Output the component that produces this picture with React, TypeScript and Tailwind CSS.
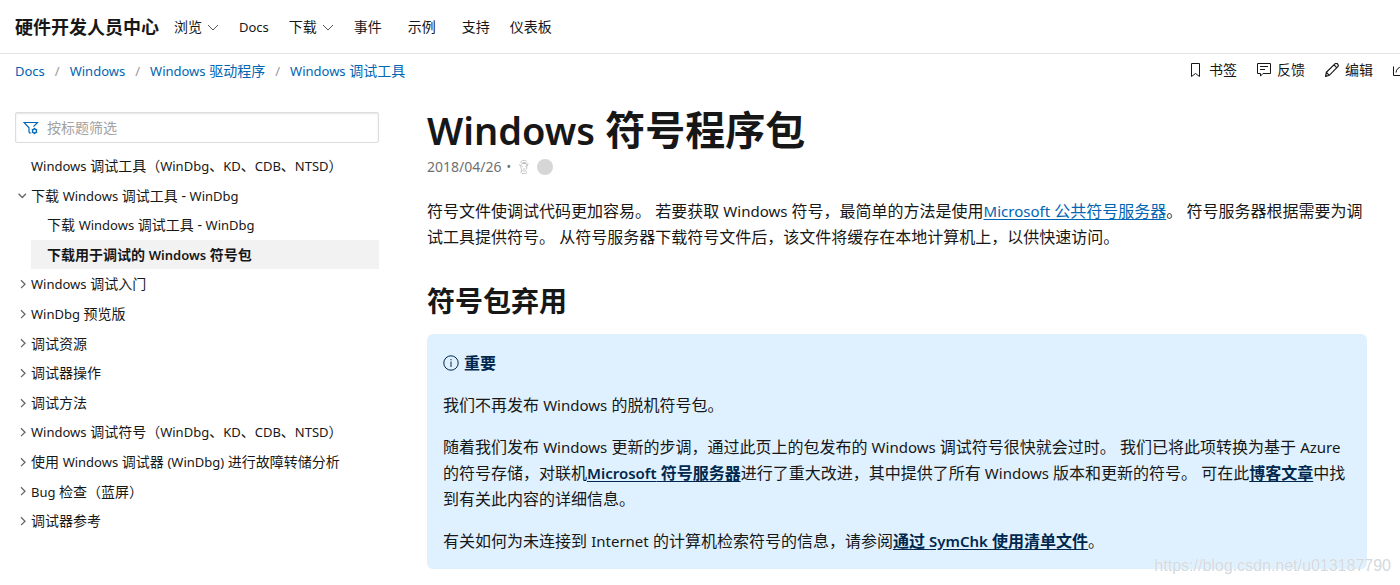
import { Fragment, type ReactNode } from "react";

type IconProps = { className?: string };

function ChevronDown({ className }: IconProps) {
  return (
    <svg viewBox="0 0 12 12" className={className} fill="none" stroke="currentColor" aria-hidden="true">
      <path d="M1 4 6 9l5-5" />
    </svg>
  );
}

function TreeChevron({ open }: { open?: boolean }) {
  return (
    <svg viewBox="0 0 10 10" className="size-[10px] shrink-0 text-[#666]" fill="none" stroke="currentColor" strokeWidth="1.3" aria-hidden="true">
      {open ? <path d="M.6 3.800l3.700 3.700L8 3.800" /> : <path d="M3 1.300l4 3.900L3 9.100" />}
    </svg>
  );
}

function BookmarkIcon() {
  return (
    <svg viewBox="0 0 14 14" className="size-[14px]" fill="none" stroke="currentColor" aria-hidden="true">
      <path d="M2.5.5h8v13l-4-3-4 3z" />
    </svg>
  );
}

function FeedbackIcon() {
  return (
    <svg viewBox="0 0 14 14" className="size-[14px]" fill="none" stroke="currentColor" aria-hidden="true">
      <path d="M.5.5h13v10H6l-2.500 2.600v-2.600h-3z" />
      <path d="M3 3.500h8M3 6.500h5" />
    </svg>
  );
}

function PencilIcon() {
  return (
    <svg viewBox="0 0 14 14" className="size-[14px]" fill="none" stroke="currentColor" strokeWidth="1.200" aria-hidden="true">
      <path d="M1.4 9.3 9.9.9c.9-.7 2.1-.6 2.8.2.7.8.7 2-.1 2.8L4.3 12.3l-3.7 1.1zM9 1.9l2.9 2.9M1.4 9.3l2.9 3" />
    </svg>
  );
}

function ShareIcon() {
  return (
    <svg viewBox="0 0 14 14" className="size-[14px]" fill="none" stroke="currentColor" aria-hidden="true">
      <path d="M.5 3.500v9h11V9M3 9.500c.5-3.500 2.500-5.500 6-5.500h4M10 1l3 3-3 3" />
    </svg>
  );
}

function FilterIcon() {
  return (
    <svg viewBox="0 0 16 14" className="h-[14px] w-4 shrink-0 text-[#0065b3]" fill="none" stroke="currentColor" aria-hidden="true">
      <path d="M7.500 12.500 6 11V6.800L1 1.500h13.500L10.500 5.700" strokeWidth="1.200" />
      <circle cx="11.500" cy="10" r="2" strokeWidth="1.300" />
      <path d="M11.500 6.800v1.200M11.500 12v1.200M8.700 8.400l1 .6M13.300 11l1 .6M8.700 11.600l1-.6M13.300 9l1-.6" />
    </svg>
  );
}

function InfoIcon() {
  return (
    <svg viewBox="0 0 16 16" className="size-4 shrink-0" fill="none" stroke="currentColor" aria-hidden="true">
      <circle cx="8" cy="8" r="7.200" />
      <path d="M8 6.500v5.500M8 4v1.300" />
    </svg>
  );
}

function AvatarSketch() {
  return (
    <svg viewBox="0 0 16 16" className="size-4" fill="none" stroke="#b0b0b0" strokeWidth=".7" aria-hidden="true">
      <path d="M4.500 3.500C5 1.500 8 .8 10.500 2M5 5.500c1.500-1.500 4-1.500 5.500-.5M5 6v3c.5 2.500 2 3.500 3.500 3 1.700-.7 2.500-2.500 2.300-4L10.500 5" />
      <path d="M6.200 7.300h1M9 7.200h1M7 10h2M3.500 5l1 2.500M12 4l-.6 3M5.500 11l-.5 3M10 12l.5 2.500M6 14.500h3.500" />
      <path d="M6 3.500l1 1M8 3v1.500M10 3.300 9.300 4.500" stroke="#808080" />
    </svg>
  );
}

/* Latin runs are set one step smaller than the Chinese text around them. */
const latinRun = /([A-Za-z0-9(][A-Za-z0-9 \-()]*[A-Za-z0-9)])/;

function Mixed({ text, size }: { text: string; size: "sm" | "md" }) {
  return (
    <>
      {text.split(latinRun).map((part, i) =>
        i % 2 === 1 ? (
          <span key={i} className={size === "sm" ? "text-[13px]" : "text-[15px]"}>
            {part}
          </span>
        ) : (
          <Fragment key={i}>{part}</Fragment>
        ),
      )}
    </>
  );
}

const navItems = [
  { label: "浏览", menu: true },
  { label: "Docs" },
  { label: "下载", menu: true },
  { label: "事件", wide: true },
  { label: "示例", wide: true },
  { label: "支持" },
  { label: "仪表板" },
];

const crumbs = ["Docs", "Windows", "Windows 驱动程序", "Windows 调试工具"];

type Node = { label: string; leaf?: boolean; children?: { label: string; current?: boolean }[] };

const tree: Node[] = [
  { label: "Windows 调试工具（WinDbg、KD、CDB、NTSD）", leaf: true },
  {
    label: "下载 Windows 调试工具 - WinDbg",
    children: [
      { label: "下载 Windows 调试工具 - WinDbg" },
      { label: "下载用于调试的 Windows 符号包", current: true },
    ],
  },
  { label: "Windows 调试入门" },
  { label: "WinDbg 预览版" },
  { label: "调试资源" },
  { label: "调试器操作" },
  { label: "调试方法" },
  { label: "Windows 调试符号（WinDbg、KD、CDB、NTSD）" },
  { label: "使用 Windows 调试器 (WinDbg) 进行故障转储分析" },
  { label: "Bug 检查（蓝屏）" },
  { label: "调试器参考" },
];

const actions: { label: string; icon: ReactNode }[] = [
  { label: "书签", icon: <BookmarkIcon /> },
  { label: "反馈", icon: <FeedbackIcon /> },
  { label: "编辑", icon: <PencilIcon /> },
];

function CalloutLink({ text }: { text: string }) {
  return (
    <a href="#" className="font-semibold text-[#00274d] underline underline-offset-2">
      <Mixed text={text} size="md" />
    </a>
  );
}

export default function App() {
  return (
    <div className="relative overflow-hidden bg-white font-['Noto_Sans','Noto_Sans_CJK_SC',sans-serif] text-sm text-[#171717]">
      <header className="flex h-[54px] items-center gap-[15px] border-b border-[#e3e3e3] pl-[15px]">
        <a href="#" className="text-lg font-bold">硬件开发人员中心</a>
        <nav className="flex items-center gap-5">
          {navItems.map((item) =>
            item.menu ? (
              <button key={item.label} type="button" className="flex items-center gap-[5px]">
                {item.label}
                <ChevronDown className="size-[12px] text-[#555]" />
              </button>
            ) : (
              <a key={item.label} href="#" className={item.wide ? "min-w-[34px]" : ""}>
                <Mixed text={item.label} size="sm" />
              </a>
            ),
          )}
        </nav>
      </header>

      <div className="flex h-[34px] items-center justify-between pl-[15px]">
        <nav aria-label="breadcrumb">
          <ol className="flex items-center gap-[10px] text-[#0065b3]">
            {crumbs.map((crumb, i) => (
              <li key={crumb} className="flex items-center gap-[10px]">
                {i > 0 && <span className="text-[13px] text-[#999]">/</span>}
                <a href="#"><Mixed text={crumb} size="sm" /></a>
              </li>
            ))}
          </ol>
        </nav>
        <div className="-mr-[7px] flex items-center gap-5 pb-0.5">
          {actions.map((action) => (
            <button key={action.label} type="button" className="flex items-center gap-[6px]">
              {action.icon}
              {action.label}
            </button>
          ))}
          <button type="button" aria-label="共享"><ShareIcon /></button>
        </div>
      </div>

      <div className="flex gap-12 pr-[33px] pl-[15px]">
        <aside className="w-[364px] shrink-0 pt-6">
          <label className="flex h-[31px] items-center gap-2 rounded-xs border border-[#dcdcdc] px-[7px] shadow-[inset_0_1px_2px_#0000001a]">
            <FilterIcon />
            <input
              type="text"
              aria-label="按标题筛选"
              placeholder="按标题筛选"
              className="min-w-0 flex-1 bg-transparent outline-none placeholder:text-[#a2a2a2]"
            />
          </label>
          <ul className="mt-2 leading-[1.4]">
            {tree.map((node) => (
              <li key={node.label}>
                <a href="#" className="flex items-center gap-[3px] py-[5px] pl-[3px]">
                  {node.leaf ? <span className="w-[10px]" /> : <TreeChevron open={!!node.children} />}
                  <span><Mixed text={node.label} size="sm" /></span>
                </a>
                {node.children && (
                  <ul className="pl-4">
                    {node.children.map((child) => (
                      <li key={child.label}>
                        <a
                          href="#"
                          className={child.current ? "block bg-[#f2f2f2] py-[5px] pl-4 font-semibold" : "block py-[5px] pl-4"}
                        >
                          <Mixed text={child.label} size="sm" />
                        </a>
                      </li>
                    ))}
                  </ul>
                )}
              </li>
            ))}
          </ul>
        </aside>

        <main className="min-w-0 flex-1 pt-[17px] pb-4">
          <h1 className="mb-0.5 text-[40px] leading-[50px] font-bold">
            <span className="text-[38px] font-semibold">Windows</span> 符号程序包
          </h1>
          <div className="flex h-5 items-center gap-[5px] text-[#707070]">
            <time>2018/04/26</time>
            <span className="text-xs">•</span>
            <AvatarSketch />
            <span className="size-4 rounded-full bg-[#d6d6d6]" />
          </div>

          <p className="mt-[21px] text-base leading-[26px]">
            <Mixed text="符号文件使调试代码更加容易。 若要获取 Windows 符号，最简单的方法是使用" size="md" />
            <a href="#" className="text-[#0065b3] underline underline-offset-2">
              <Mixed text="Microsoft 公共符号服务器" size="md" />
            </a>
            。 符号服务器根据需要为调试工具提供符号。 从符号服务器下载符号文件后，该文件将缓存在本地计算机上，以供快速访问。
          </p>

          <h2 className="mt-[33px] text-[28px] leading-9 font-bold">符号包弃用</h2>

          <section className="mt-[15px] flex flex-col gap-4 rounded-md bg-[#dff1ff] px-4 pt-4 pb-[15px] text-base leading-[26px]">
            <p className="flex items-center gap-[5px] font-semibold text-[#00274d]">
              <InfoIcon />
              重要
            </p>
            <p><Mixed text="我们不再发布 Windows 的脱机符号包。" size="md" /></p>
            <p>
              <Mixed
                text="随着我们发布 Windows 更新的步调，通过此页上的包发布的 Windows 调试符号很快就会过时。 我们已将此项转换为基于 Azure 的符号存储，对联机"
                size="md"
              />
              <CalloutLink text="Microsoft 符号服务器" />
              <Mixed text="进行了重大改进，其中提供了所有 Windows 版本和更新的符号。 可在此" size="md" />
              <CalloutLink text="博客文章" />
              中找到有关此内容的详细信息。
            </p>
            <p>
              <Mixed text="有关如何为未连接到 Internet 的计算机检索符号的信息，请参阅" size="md" />
              <CalloutLink text="通过 SymChk 使用清单文件" />。
            </p>
          </section>
        </main>
      </div>

      <div className="pointer-events-none absolute right-[9px] bottom-[9px] font-['Liberation_Sans',sans-serif] text-base leading-5 text-[#d3d9de] [text-shadow:0_0_1px_#ffffff]">
        https://blog.csdn.net/u013187790
      </div>
    </div>
  );
}
